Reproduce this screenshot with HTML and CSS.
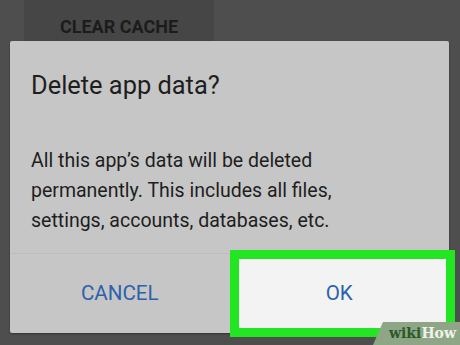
FILE: index.html
```html
<!DOCTYPE html>
<html>
<head>
<meta charset="utf-8">
<link rel="stylesheet" href="styles.css">
</head>
<body>
<div class="screen">
  <div class="top">
    <div class="clear-btn">CLEAR CACHE</div>
  </div>
  <div class="dialog">
    <div class="title">Delete app data?</div>
    <div class="message">All this app’s data will be deleted<br>permanently. This includes all files,<br>settings, accounts, databases, etc.</div>
    <div class="actions">
      <div class="btn cancel">CANCEL</div>
      <div class="btn ok"><div class="highlight"></div><span class="label">OK</span></div>
    </div>
  </div>
  <div class="watermark"><span class="wiki">wiki</span><span class="how">How</span></div>
</div>
</body>
</html>
```
FILE: styles.css
```css
html, body {
  margin: 0;
  padding: 0;
}
body {
  width: 460px;
  height: 345px;
  overflow: hidden;
  background: #4e4e4e;
  font-family: Roboto, "Noto Sans", sans-serif;
}
.screen {
  position: relative;
  width: 460px;
  height: 345px;
}
.top {
  padding-left: 24px;
  height: 41px;
}
.clear-btn {
  width: 190px;
  height: 42px;
  background: #464646;
  color: #1c1c1c;
  font-weight: 700;
  font-size: 18px;
  display: flex;
  align-items: center;
  justify-content: center;
  box-sizing: border-box;
  padding-top: 10px;
}
.dialog {
  position: relative;
  margin-left: 10px;
  width: 439px;
  height: 292px;
  background: #c6c6c6;
  border-radius: 2px;
  box-shadow: 0 1px 2px rgba(0,0,0,0.35);
  display: flex;
  flex-direction: column;
}
.title {
  padding: 29px 0 0 21px;
  font-size: 25.4px;
  line-height: 30px;
  color: #1e1e1e;
}
.message {
  padding: 46px 0 0 21px;
  font-size: 19.5px;
  line-height: 30px;
  color: #1e1e1e;
  height: 90px;
}
.actions {
  margin-top: 17px;
  border-top: 1px solid #bdbdbd;
  flex: 1;
  display: flex;
}
.btn {
  flex: 1;
  display: flex;
  align-items: center;
  justify-content: center;
  color: #2c62ac;
  font-size: 20.6px;
  padding-bottom: 1px;
}
.btn.ok {
  position: relative;
}
.highlight {
  position: absolute;
  top: -4px;
  left: 0;
  right: -6px;
  bottom: -4px;
  border: 9px solid #22e622;
  background: #f3f3f3;
}
.label {
  position: relative;
}
.watermark {
  position: absolute;
  right: 0;
  bottom: 0;
  width: 87px;
  height: 23px;
  background: #8fa686;
  clip-path: polygon(10px 0, 100% 0, 100% 100%, 0 100%);
  font-family: "DejaVu Serif", serif;
  font-weight: 700;
  font-size: 14px;
  line-height: 23px;
  text-align: right;
  padding-right: 4px;
  box-sizing: border-box;
}
.wiki {
  color: #2a5a26;
}
.how {
  color: #eef3ea;
}
```
